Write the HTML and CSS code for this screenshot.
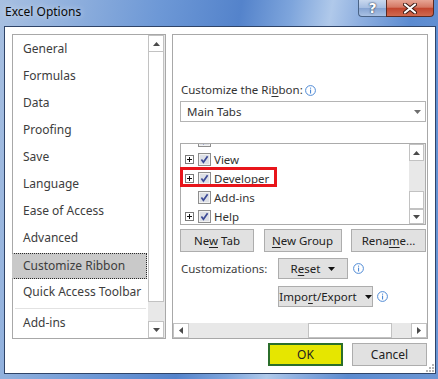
FILE: index.html
```html
<!DOCTYPE html>
<html>
<head>
<meta charset="utf-8">
<title>Excel Options</title>
<link rel="stylesheet" href="styles.css">
</head>
<body>
<div class="window">
  <div class="titlebar">
    <span class="title">Excel Options</span>
    <div class="caption-btns">
      <div class="cbtn help">?</div>
      <div class="cbtn close">
        <svg width="14" height="11" viewBox="0 0 14 11"><path d="M2 1.5L12 9.5M12 1.5L2 9.5" stroke="#3b1a14" stroke-width="4" stroke-linecap="round"/><path d="M2 1.5L12 9.5M12 1.5L2 9.5" stroke="#ffffff" stroke-width="2.2" stroke-linecap="round"/></svg>
      </div>
    </div>
  </div>
  <div class="client">
    <div class="panels">
      <div class="nav">
        <ul class="nav-list">
          <li>General</li>
          <li>Formulas</li>
          <li>Data</li>
          <li>Proofing</li>
          <li>Save</li>
          <li>Language</li>
          <li>Ease of Access</li>
          <li>Advanced</li>
          <li class="selected"><span class="sel-box">Customize Ribbon</span></li>
          <li>Quick Access Toolbar</li>
          <li class="sep"></li>
          <li>Add-ins</li>
        </ul>
        <div class="vscroll">
          <div class="sbtn up"><svg width="7" height="4" viewBox="0 0 7 4"><path d="M0 4L3.5 0L7 4Z" fill="#4a4a4a"/></svg></div>
          <div class="thumb big"></div>
          <div class="track"></div>
          <div class="sbtn down"><svg width="7" height="4" viewBox="0 0 7 4"><path d="M0 0L3.5 4L7 0Z" fill="#4a4a4a"/></svg></div>
        </div>
      </div>
      <div class="main">
        <div class="main-body">
          <div class="label-row">
            <span>Customize the Ri<u>b</u>bon:</span>
            <svg class="info" width="11" height="11" viewBox="0 0 11 11"><circle cx="5.5" cy="5.5" r="4.9" fill="#fff" stroke="#4f8ad5"/><rect x="5" y="2.6" width="1.1" height="1.1" fill="#4f8ad5"/><rect x="5" y="4.6" width="1.1" height="3.9" fill="#4f8ad5"/></svg>
          </div>
          <div class="select">
            <span>Main Tabs</span>
            <svg width="7" height="4" viewBox="0 0 7 4"><path d="M0 0L3.5 4L7 0Z" fill="#6e6e6e"/></svg>
          </div>
          <div class="tree">
            <div class="tree-items">
              <div class="row partial">
                <span class="spacer"></span>
                <svg class="cb" width="13" height="13" viewBox="0 0 13 13"><rect x="0.5" y="0.5" width="12" height="12" fill="#f2f2f2" stroke="#8e8e8e"/><rect x="2" y="2" width="9" height="9" fill="#dde0e6"/><path d="M3.4 6.6L5.4 9.2L9.6 3.2" fill="none" stroke="#3c4a96" stroke-width="1.7"/></svg>
              </div>
              <div class="row">
                <svg class="plus" width="9" height="9" viewBox="0 0 9 9"><rect x="0.5" y="0.5" width="8" height="8" fill="#fff" stroke="#7b7b7b"/><path d="M2 4.5H7M4.5 2V7" stroke="#111"/></svg>
                <svg class="cb" width="13" height="13" viewBox="0 0 13 13"><rect x="0.5" y="0.5" width="12" height="12" fill="#f2f2f2" stroke="#8e8e8e"/><rect x="2" y="2" width="9" height="9" fill="#dde0e6"/><path d="M3.4 6.6L5.4 9.2L9.6 3.2" fill="none" stroke="#3c4a96" stroke-width="1.7"/></svg>
                <span class="rtext">View</span>
              </div>
              <div class="row">
                <svg class="plus" width="9" height="9" viewBox="0 0 9 9"><rect x="0.5" y="0.5" width="8" height="8" fill="#fff" stroke="#7b7b7b"/><path d="M2 4.5H7M4.5 2V7" stroke="#111"/></svg>
                <svg class="cb" width="13" height="13" viewBox="0 0 13 13"><rect x="0.5" y="0.5" width="12" height="12" fill="#f2f2f2" stroke="#8e8e8e"/><rect x="2" y="2" width="9" height="9" fill="#dde0e6"/><path d="M3.4 6.6L5.4 9.2L9.6 3.2" fill="none" stroke="#3c4a96" stroke-width="1.7"/></svg>
                <span class="rtext">Developer</span>
              </div>
              <div class="row">
                <span class="spacer"></span>
                <svg class="cb" width="13" height="13" viewBox="0 0 13 13"><rect x="0.5" y="0.5" width="12" height="12" fill="#f2f2f2" stroke="#8e8e8e"/><rect x="2" y="2" width="9" height="9" fill="#dde0e6"/><path d="M3.4 6.6L5.4 9.2L9.6 3.2" fill="none" stroke="#3c4a96" stroke-width="1.7"/></svg>
                <span class="rtext">Add-ins</span>
              </div>
              <div class="row">
                <svg class="plus" width="9" height="9" viewBox="0 0 9 9"><rect x="0.5" y="0.5" width="8" height="8" fill="#fff" stroke="#7b7b7b"/><path d="M2 4.5H7M4.5 2V7" stroke="#111"/></svg>
                <svg class="cb" width="13" height="13" viewBox="0 0 13 13"><rect x="0.5" y="0.5" width="12" height="12" fill="#f2f2f2" stroke="#8e8e8e"/><rect x="2" y="2" width="9" height="9" fill="#dde0e6"/><path d="M3.4 6.6L5.4 9.2L9.6 3.2" fill="none" stroke="#3c4a96" stroke-width="1.7"/></svg>
                <span class="rtext">Help</span>
              </div>
            </div>
            <div class="vscroll small">
              <div class="sbtn up"><svg width="7" height="4" viewBox="0 0 7 4"><path d="M0 4L3.5 0L7 4Z" fill="#4a4a4a"/></svg></div>
              <div class="track t1"></div>
              <div class="thumb"></div>
              <div class="sbtn down"><svg width="7" height="4" viewBox="0 0 7 4"><path d="M0 0L3.5 4L7 0Z" fill="#4a4a4a"/></svg></div>
            </div>
            <div class="marker"></div>
          </div>
          <div class="btn-row">
            <div class="btn w74"><span>Ne<u>w</u> Tab</span></div>
            <div class="btn w78"><span><u>N</u>ew Group</span></div>
            <div class="btn w75"><span>Rena<u>m</u>e...</span></div>
          </div>
          <div class="cust-row first">
            <span class="cust-label">Customizations:</span>
            <div class="btn small w70"><span>R<u>e</u>set</span><svg class="dd" width="7" height="4" viewBox="0 0 7 4"><path d="M0 0L3.5 4L7 0Z" fill="#111"/></svg></div>
            <svg class="info gap5" width="11" height="11" viewBox="0 0 11 11"><circle cx="5.5" cy="5.5" r="4.9" fill="#fff" stroke="#4f8ad5"/><rect x="5" y="2.6" width="1.1" height="1.1" fill="#4f8ad5"/><rect x="5" y="4.6" width="1.1" height="3.9" fill="#4f8ad5"/></svg>
          </div>
          <div class="cust-row second">
            <span class="cust-label"></span>
            <div class="btn small w95"><span>Impo<u>r</u>t/Export</span><svg class="dd" width="7" height="4" viewBox="0 0 7 4"><path d="M0 0L3.5 4L7 0Z" fill="#111"/></svg></div>
            <svg class="info gap4" width="11" height="11" viewBox="0 0 11 11"><circle cx="5.5" cy="5.5" r="4.9" fill="#fff" stroke="#4f8ad5"/><rect x="5" y="2.6" width="1.1" height="1.1" fill="#4f8ad5"/><rect x="5" y="4.6" width="1.1" height="3.9" fill="#4f8ad5"/></svg>
          </div>
        </div>
        <div class="hscroll">
          <div class="hbtn"><svg width="4" height="7" viewBox="0 0 4 7"><path d="M4 0L0 3.5L4 7Z" fill="#4a4a4a"/></svg></div>
          <div class="htrack a"></div>
          <div class="hthumb"></div>
          <div class="htrack b"></div>
          <div class="hbtn"><svg width="4" height="7" viewBox="0 0 4 7"><path d="M0 0L4 3.5L0 7Z" fill="#4a4a4a"/></svg></div>
        </div>
      </div>
    </div>
    <div class="footer">
      <div class="btn ok"><span>OK</span></div>
      <div class="btn cancel"><span>Cancel</span></div>
    </div>
    <svg class="grip" width="9" height="9" viewBox="0 0 9 9"><g fill="#b5b5b5"><rect x="7" y="1" width="2" height="2"/><rect x="4" y="4" width="2" height="2"/><rect x="7" y="4" width="2" height="2"/><rect x="1" y="7" width="2" height="2"/><rect x="4" y="7" width="2" height="2"/><rect x="7" y="7" width="2" height="2"/></g></svg>
  </div>
</div>
</body>
</html>
```
FILE: styles.css
```css
* { box-sizing: border-box; }
html, body { margin: 0; padding: 0; }
body {
  width: 438px;
  height: 379px;
  overflow: hidden;
  font-family: "Noto Sans", "Open Sans", sans-serif;
  font-size: 11.5px;
  color: #333;
}
u { text-decoration: underline; text-underline-offset: 2px; }

.window {
  width: 438px;
  height: 379px;
  display: flex;
  flex-direction: column;
  background: linear-gradient(100deg, #a8c0e1 0%, #90b0dd 14%, #6d98d6 32%, #5483cb 48%, #7ea5dc 58%, #b0c9ea 66%, #8eafe0 72%, #5c8bd0 82%, #6b96d4 100%);
}

.titlebar {
  height: 26px;
  display: flex;
  justify-content: space-between;
  align-items: flex-start;
  padding-left: 5px;
  flex: none;
}
.title {
  line-height: 24px;
  font-size: 12px;
  color: #0a0a0a;
  text-shadow: 0 0 6px rgba(255,255,255,0.7);
}
.caption-btns { display: flex; margin-right: 4px; }
.cbtn {
  height: 17px;
  display: flex;
  align-items: center;
  justify-content: center;
}
.help {
  width: 28px;
  border: 1px solid #4a6386;
  border-top: none;
  border-right: none;
  border-radius: 0 0 0 4px;
  background: linear-gradient(#c9d8ee, #a6bee2 48%, #86a4d2 52%, #a9c1e4);
  color: #fff;
  font-family: "DejaVu Sans", sans-serif;
  font-weight: bold;
  font-size: 14px;
  line-height: 17px;
  text-shadow: 0 0 1px #2b3c57, 0 0 2px #2b3c57;
}
.close {
  width: 48px;
  border: 1px solid #5a2a22;
  border-top: none;
  border-radius: 0 0 4px 0;
  background: linear-gradient(#e7a595, #d57864 45%, #c2462f 52%, #d0694f);
}

.client {
  position: relative;
  flex: 1;
  margin: 0 2px 5px 4px;
  border: 1px solid #2f4468;
  background: #fff;
  padding: 7px 7px 0 7px;
  display: flex;
  flex-direction: column;
}
.panels {
  display: flex;
  gap: 6px;
  height: 305px;
}

/* left navigation */
.nav {
  width: 154px;
  border: 1px solid #a8a8a8;
  display: flex;
}
.nav-list {
  flex: 1;
  list-style: none;
  margin: 0;
  padding: 0;
  color: #3d3d3d;
  font-size: 12px;
}
.nav-list li {
  height: 27px;
  line-height: 27px;
  padding-left: 10px;
  white-space: nowrap;
}
.nav-list li.selected {
  padding: 2px 0 0 0;
  margin-left: -1px;
}
.sel-box {
  display: block;
  height: 26px;
  line-height: 23px;
  padding-left: 10px;
  background: #c9c9c9;
  border: 1px dotted #2a2a2a;
  border-left-color: #c9c9c9;
  margin-right: 1px;
}
.nav-list li.sep {
  height: 4px;
  padding: 0;
  margin: 0 2px 0 2px;
  border-bottom: 1px solid #e2e2e2;
}

.vscroll {
  width: 17px;
  display: flex;
  flex-direction: column;
  background: #e8e8e8;
}
.vscroll .sbtn {
  height: 17px;
  background: #fff;
  border: 1px solid #c2c2c2;
  margin-right: 1px;
  display: flex;
  align-items: center;
  justify-content: center;
}
.vscroll .thumb {
  background: #fff;
  border: 1px solid #c2c2c2;
  border-top: none;
  margin-right: 1px;
}
.vscroll .thumb.big { height: 250px; }
.vscroll .track { flex: 1; }

/* right panel */
.main {
  flex: 1;
  border: 1px solid #a8a8a8;
  display: flex;
  flex-direction: column;
}
.main-body {
  flex: 1;
  padding: 0 1px 0 7px;
}
.label-row {
  margin-top: 47px;
  height: 16px;
  line-height: 16px;
  display: flex;
  align-items: center;
  padding-left: 1px;
}
.label-row .info { margin-left: 2px; }
.select {
  margin-top: 3px;
  height: 21px;
  border: 1px solid #b4b4b4;
  display: flex;
  align-items: center;
  justify-content: space-between;
  padding: 0 4px 0 6px;
}
.tree {
  position: relative;
  margin-top: 21px;
  height: 82px;
  border: 1px solid #ababab;
  display: flex;
}
.tree-items {
  flex: 1;
  overflow: hidden;
}
.row {
  height: 19px;
  display: flex;
  align-items: center;
  padding-left: 4px;
}
.row.partial { margin-top: -13px; }
.row .plus, .row .spacer { width: 9px; flex: none; }
.row .cb { margin-left: 4px; flex: none; }
.row .rtext { margin-left: 3px; line-height: 19px; }
.vscroll.small { width: 16px; }
.vscroll.small .sbtn.up { height: 17px; }
.vscroll.small .track.t1 { height: 30px; flex: none; }
.vscroll.small .thumb { height: 18px; border-top: 1px solid #c2c2c2; }
.vscroll.small .sbtn.down { flex: 1; height: auto; }
.marker {
  position: absolute;
  left: -1px;
  top: 23px;
  width: 97px;
  height: 20px;
  border: 3px solid #e8151b;
}

.btn {
  height: 23px;
  background: #e1e1e1;
  border: 1px solid #adadad;
  display: flex;
  align-items: center;
  justify-content: center;
  color: #222;
  white-space: nowrap;
}
.btn-row {
  margin-top: 4px;
  display: flex;
  justify-content: space-between;
}
.w74 { width: 74px; }
.w78 { width: 78px; }
.w75 { width: 75px; }
.w70 { width: 70px; }
.w95 { width: 95px; }
.btn.small { height: 21px; }
.btn .dd { margin-left: 8px; }
.cust-row {
  display: flex;
  align-items: center;
}
.cust-row.first { margin-top: 6px; }
.cust-row.second { margin-top: 7px; }
.cust-label { width: 98px; padding-left: 1px; color: #3d3d3d; }
.gap5 { margin-left: 5px; }
.gap4 { margin-left: 4px; }

.hscroll {
  height: 15px;
  display: flex;
  background: #e8e8e8;
}
.hbtn {
  width: 16px;
  background: #fff;
  border: 1px solid #c2c2c2;
  display: flex;
  align-items: center;
  justify-content: center;
}
.htrack.a { width: 119px; }
.htrack.b { flex: 1; }
.hthumb {
  width: 84px;
  background: #fff;
  border: 1px solid #c2c2c2;
}

.footer {
  margin-top: 4px;
  display: flex;
  justify-content: flex-end;
  gap: 9px;
  padding-right: 1px;
}
.footer .btn { width: 75px; height: 23px; font-size: 12px; }
.btn.ok {
  background: #e6e600;
  border: 2px solid #2b6e2b;
}
.grip {
  position: absolute;
  right: 1px;
  bottom: 1px;
}
```
